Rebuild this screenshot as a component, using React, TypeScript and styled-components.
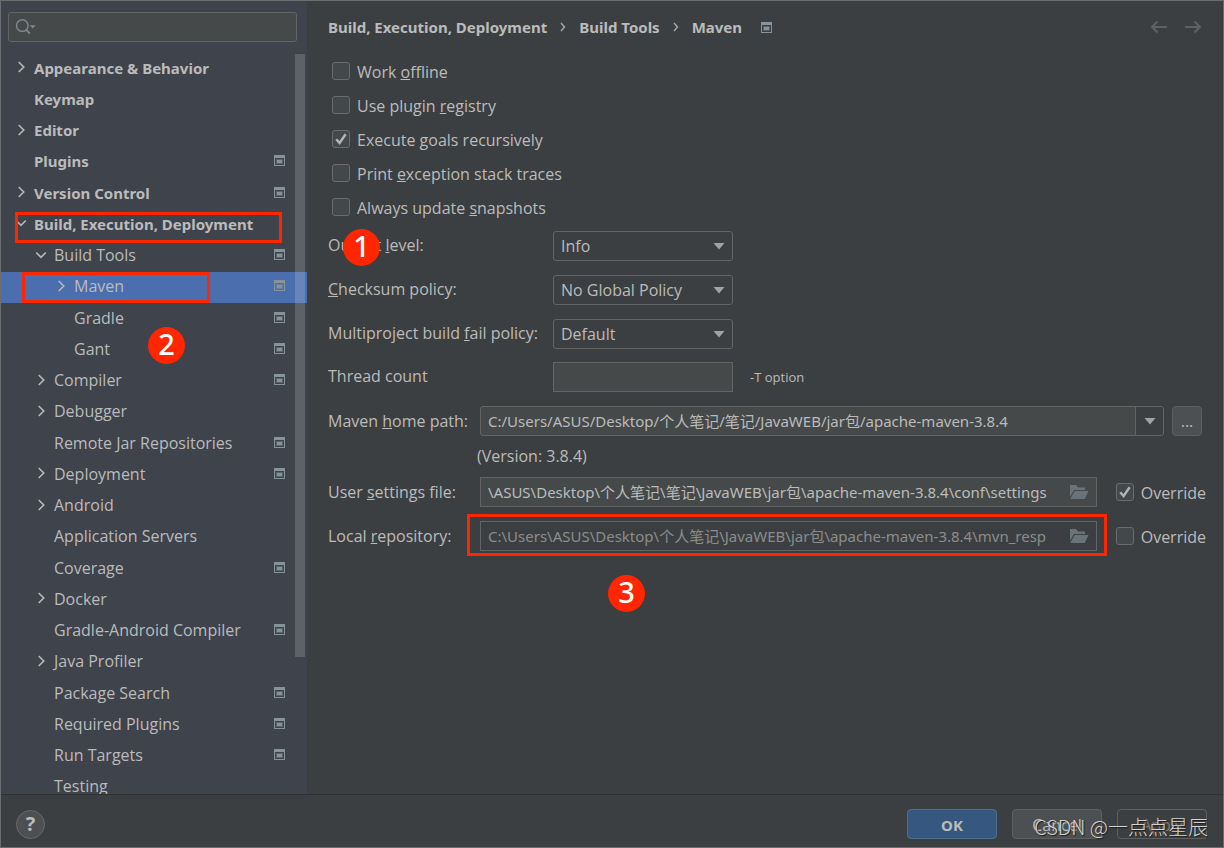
import React from "react";
import styled, { createGlobalStyle, css } from "styled-components";

const color = {
  panel: "#3c3f41",
  sidebar: "#3e434c",
  field: "#45494a",
  border: "#646464",
  text: "#bbbbbb",
  muted: "#8c8c8c",
  selection: "#4b6eaf",
  mark: "#ff2600",
};

const font = {
  body: `"Open Sans", "Noto Sans CJK SC", sans-serif`,
  alt: `"Noto Sans", "Noto Sans CJK SC", sans-serif`,
};

const GlobalStyle = createGlobalStyle`
  *, *::before, *::after { box-sizing: border-box; }
  body { margin: 0; background: ${color.panel}; }
  body, button, input, select {
    font-family: ${font.body};
    font-size: 16px;
    line-height: 20px;
    color: ${color.text};
  }
  button, input, select { margin: 0; outline: none; }
`;

const heading = css`
  font-family: ${font.alt};
  font-size: 15px;
  font-weight: 700;
`;

const Window = styled.div`
  position: relative;
  display: flex;
  flex-direction: column;
  height: 100vh;
  border: 1px solid #6b6e70;
  background: ${color.panel};
`;

const Body = styled.div`
  display: flex;
  flex: 1;
  min-height: 0;
`;

/* ---------- sidebar ---------- */

const Sidebar = styled.aside`
  position: relative;
  display: flex;
  flex-direction: column;
  flex: 0 0 306px;
  gap: 11px;
  padding-top: 11px;
  background: ${color.sidebar};
`;

const SearchBox = styled.label`
  display: flex;
  align-items: center;
  height: 30px;
  margin: 0 10px 0 7px;
  padding: 0 6px;
  border: 1px solid ${color.border};
  border-radius: 3px;
  background: ${color.field};
`;

const SearchInput = styled.input`
  flex: 1;
  min-width: 0;
  border: 0;
  background: transparent;
`;

const TreeViewport = styled.nav`
  position: relative;
  flex: 1;
  min-height: 0;
  overflow: hidden;
`;

const Tree = styled.ul`
  display: flex;
  flex-direction: column;
  height: 750px;
  margin: 0;
  padding: 0;
  list-style: none;
`;

const TreeItem = styled.li`
  position: relative;
  flex: 1;
`;

const TreeRow = styled.button<{ $level: number; $selected?: boolean }>`
  display: flex;
  align-items: center;
  width: 100%;
  height: 100%;
  padding: 0 22px 3px ${(p) => 13 + p.$level * 20}px;
  border: 0;
  background: ${(p) => (p.$selected ? color.selection : "transparent")};
  text-align: left;
  ${(p) => p.$level === 0 && heading}
`;

const ArrowSlot = styled.span`
  display: flex;
  justify-content: center;
  width: 14px;
  margin-right: 6px;
`;

const RowText = styled.span`
  flex: 1;
  padding-top: 1px;
  white-space: nowrap;
`;

const ScrollThumb = styled.div`
  position: absolute;
  top: 53px;
  right: 2px;
  width: 10px;
  height: 603px;
  background: rgba(255, 255, 255, 0.16);
`;

/* ---------- content ---------- */

const Content = styled.main`
  flex: 1;
  min-width: 0;
  padding: 11px 17px 0 21px;
`;

const Header = styled.header`
  display: flex;
  align-items: center;
  height: 30px;
  padding-right: 4px;
  ${heading}
`;

const Crumbs = styled.div`
  display: flex;
  align-items: center;
  flex: 1;
  gap: 13px;
`;

const PageIcon = styled.span`
  display: flex;
  margin-left: 6px;
`;

const NavButtons = styled.div`
  display: flex;
  gap: 16px;
`;

const IconButton = styled.button`
  display: flex;
  padding: 0;
  border: 0;
  background: transparent;
`;

const CheckList = styled.div`
  padding: 12px 0 0 4px;
`;

const CheckRow = styled.div`
  display: flex;
  align-items: center;
  height: 34px;
`;

const CheckLabel = styled.label`
  display: flex;
  align-items: center;
  gap: 7px;
  white-space: nowrap;
`;

const CheckBox = styled.input`
  appearance: none;
  flex: none;
  width: 18px;
  height: 18px;
  border: 1px solid #6b6b6b;
  border-radius: 3px;
  background: #43494a;
`;

const CheckWrap = styled.span`
  position: relative;
  display: flex;
`;

const CheckText = styled.span`
  padding-top: 2px;
`;

const Tick = styled.svg`
  position: absolute;
  top: 0;
  left: 0;
  pointer-events: none;
`;

const Row = styled.div<{ $height?: number }>`
  display: flex;
  align-items: center;
  height: ${(p) => p.$height ?? 44}px;
`;

const RowLabel = styled.label<{ $wide?: boolean }>`
  position: relative;
  flex: none;
  width: ${(p) => (p.$wide ? 225 : 152)}px;
  padding-bottom: ${(p) => (p.$wide ? 2 : 0)}px;
  white-space: nowrap;
`;

const SelectWrap = styled.div`
  position: relative;
  width: 180px;
`;

const fieldBox = css`
  height: 30px;
  border: 1px solid ${color.border};
`;

const Select = styled.select`
  ${fieldBox}
  appearance: none;
  width: 100%;
  padding: 0 28px 0 7px;
  border-radius: 3px;
  background: ${color.panel};
`;

const SelectArrow = styled.span`
  position: absolute;
  top: 12px;
  right: 8px;
  display: flex;
  pointer-events: none;
`;

const ThreadInput = styled.input`
  ${fieldBox}
  width: 180px;
  padding: 0 7px;
  background: ${color.field};
`;

const Hint = styled.span`
  margin-left: 17px;
  font-size: 13px;
`;

const Combo = styled.div`
  ${fieldBox}
  display: flex;
  flex: 1;
  min-width: 0;
  border-radius: 3px;
  overflow: hidden;
  background: ${color.field};
`;

const PathInput = styled.input`
  flex: 1;
  min-width: 0;
  padding: 0 0 1px 7px;
  border: 0;
  background: transparent;
  font-family: ${font.alt};
  font-size: 15px;
  &:disabled { color: ${color.muted}; }
`;

const ComboButton = styled.button`
  display: flex;
  align-items: center;
  justify-content: center;
  width: 28px;
  padding: 0;
  border: 0;
  border-left: 1px solid ${color.border};
  background: ${color.panel};
`;

const MoreButton = styled.button`
  width: 30px;
  height: 30px;
  margin: 0 4px 0 8px;
  padding: 0;
  border: 1px solid #5e6060;
  border-radius: 4px;
  background: #4c5052;
`;

const Version = styled.span`
  padding: 0 0 2px 149px;
`;

const FileField = styled.div<{ $disabled?: boolean }>`
  ${fieldBox}
  position: relative;
  display: flex;
  align-items: center;
  flex: 1;
  min-width: 0;
  margin-right: 19px;
  padding-right: 7px;
  background: ${(p) => (p.$disabled ? color.panel : color.field)};
`;

/* ---------- footer ---------- */

const Footer = styled.footer`
  display: flex;
  align-items: center;
  gap: 15px;
  flex: 0 0 53px;
  padding: 6px 16px 0 15px;
  border-top: 1px solid #2f3133;
`;

const HelpButton = styled.button`
  width: 29px;
  height: 29px;
  margin-right: auto;
  padding: 0;
  border: 1px solid #686a6c;
  border-radius: 50%;
  background: #4c5052;
  font-size: 20px;
  font-weight: 700;
`;

const DialogButton = styled.button<{ $kind?: "primary" | "disabled" }>`
  width: 90px;
  height: 30px;
  padding: 2px 0 0;
  border: 1px solid ${(p) => (p.$kind === "primary" ? "#4c708c" : "#5e6060")};
  border-radius: 4px;
  background: ${(p) =>
    p.$kind === "primary" ? "#365880" : p.$kind === "disabled" ? color.panel : "#4c5052"};
  color: ${(p) => (p.$kind === "disabled" ? "#777777" : color.text)};
  ${(p) => p.$kind === "primary" && heading}
`;

/* ---------- annotations ---------- */

const MarkBox = styled.span<{ $inset: string }>`
  position: absolute;
  inset: ${(p) => p.$inset};
  border: 3px solid ${color.mark};
  pointer-events: none;
`;

const MarkBadge = styled.span<{ $top: number; $left: number }>`
  position: absolute;
  top: ${(p) => p.$top}px;
  left: ${(p) => p.$left}px;
  width: 37px;
  height: 37px;
  border-radius: 50%;
  background: ${color.mark};
  color: #ffffff;
  font-family: ${font.alt};
  font-size: 29px;
  font-weight: 500;
  line-height: 34px;
  text-align: center;
  pointer-events: none;
`;

const Watermark = styled.span`
  position: absolute;
  right: 15px;
  bottom: 6px;
  color: #d4d4d4;
  font-family: "Noto Sans CJK SC", sans-serif;
  font-size: 20px;
  font-weight: 300;
  line-height: 28px;
  text-shadow: 1px 1px 1px #1c1c1c;
  white-space: nowrap;
  pointer-events: none;
`;

/* ---------- icons ---------- */

const Chevron = ({ open }: { open?: boolean }) => (
  <svg width="14" height="14" viewBox="0 0 14 14" fill="none" stroke="#b4b6b8" strokeWidth="1.7">
    <path d={open ? "M2.2 4.5 7 9.3 11.8 4.5" : "M4.7 2 9.7 7 4.7 12"} />
  </svg>
);

const ProjectIcon = () => (
  <svg width="11" height="11" viewBox="0 0 11 11" shapeRendering="crispEdges">
    <path fill="#87939a" fillRule="evenodd" d="M0 0H11V11H0ZM1 3V10H10V3Z" />
    <path fill="#87939a" d="M3 5H8V8H3Z" />
    <path fill="#87939a" fillOpacity="0.4" d="M2 4H9V9H2Z" />
  </svg>
);

const SearchIcon = () => (
  <svg width="22" height="18" viewBox="0 0 22 18" fill="none" stroke="#7f8b91" strokeWidth="1.4">
    <circle cx="7.3" cy="7.6" r="5.8" />
    <path d="M11.3 11.8 14.8 15.6" strokeWidth="1.8" />
    <path d="M14.8 7.3H20.6L17.7 10.5Z" fill="#7f8b91" stroke="none" />
  </svg>
);

const TriangleIcon = () => (
  <svg width="12" height="7" viewBox="0 0 12 7">
    <path d="M0.5 0H11.5L6 6.5Z" fill="#a0a3a5" />
  </svg>
);

const FolderIcon = () => (
  <svg width="20" height="16" viewBox="0 0 20 16" fill="#69747a">
    <path d="M1 1H7L9 3.5H16V6H5L1 13Z" />
    <path d="M5.7 7H19.5L15.8 15H1.2Z" />
  </svg>
);

const NavArrow = ({ forward }: { forward?: boolean }) => (
  <svg width="18" height="14" viewBox="0 0 18 14" fill="none" stroke="#5f6163" strokeWidth="2">
    <path d={forward ? "M1 7H16M10.5 1.5 16 7 10.5 12.5" : "M17 7H2M7.5 1.5 2 7 7.5 12.5"} />
  </svg>
);

const CrumbArrow = () => (
  <svg width="6" height="10" viewBox="0 0 6 10" fill="none" stroke="#a8aaac" strokeWidth="1.4">
    <path d="M1 1 4.5 5 1 9" />
  </svg>
);

/* ---------- data ---------- */

type Node = {
  text: string;
  level: number;
  arrow?: "closed" | "open";
  project?: boolean;
  selected?: boolean;
  mark?: React.ReactNode;
};

const nodes: Node[] = [
  { text: "Appearance & Behavior", level: 0, arrow: "closed" },
  { text: "Keymap", level: 0 },
  { text: "Editor", level: 0, arrow: "closed" },
  { text: "Plugins", level: 0, project: true },
  { text: "Version Control", level: 0, arrow: "closed", project: true },
  {
    text: "Build, Execution, Deployment",
    level: 0,
    arrow: "open",
    mark: <MarkBox $inset="3px 25px -2px 14px" />,
  },
  { text: "Build Tools", level: 1, arrow: "open", project: true },
  {
    text: "Maven",
    level: 2,
    arrow: "closed",
    project: true,
    selected: true,
    mark: <MarkBox $inset="0 97px 0 21px" />,
  },
  { text: "Gradle", level: 2, project: true },
  { text: "Gant", level: 2, project: true, mark: <MarkBadge $top={-7} $left={147}>2</MarkBadge> },
  { text: "Compiler", level: 1, arrow: "closed", project: true },
  { text: "Debugger", level: 1, arrow: "closed" },
  { text: "Remote Jar Repositories", level: 1, project: true },
  { text: "Deployment", level: 1, arrow: "closed", project: true },
  { text: "Android", level: 1, arrow: "closed" },
  { text: "Application Servers", level: 1 },
  { text: "Coverage", level: 1, project: true },
  { text: "Docker", level: 1, arrow: "closed" },
  { text: "Gradle-Android Compiler", level: 1, project: true },
  { text: "Java Profiler", level: 1, arrow: "closed" },
  { text: "Package Search", level: 1, project: true },
  { text: "Required Plugins", level: 1, project: true },
  { text: "Run Targets", level: 1, project: true },
  { text: "Testing", level: 1 },
];

/* Draws a label whose mnemonic letter follows an underscore. */
const Mnemonic = ({ text }: { text: string }) => {
  const at = text.indexOf("_");
  if (at < 0) return <span>{text}</span>;
  return (
    <span>
      {text.slice(0, at)}
      <u>{text[at + 1]}</u>
      {text.slice(at + 2)}
    </span>
  );
};

const Check = ({ text, checked }: { text: string; checked?: boolean }) => {
  const [on, setOn] = React.useState(!!checked);
  return (
    <CheckLabel>
      <CheckWrap>
        <CheckBox type="checkbox" checked={on} onChange={() => setOn(!on)} />
        {on && (
          <Tick width="18" height="18" viewBox="0 0 18 18" fill="none" stroke="#b4b4b4" strokeWidth="2.4">
            <path d="M4.2 9.2 7.6 13 13.6 4.2" />
          </Tick>
        )}
      </CheckWrap>
      <CheckText>
        <Mnemonic text={text} />
      </CheckText>
    </CheckLabel>
  );
};

const Choice = ({
  id,
  label,
  value,
  height,
  children,
}: {
  id: string;
  label: string;
  value: string;
  height?: number;
  children?: React.ReactNode;
}) => (
  <Row $height={height}>
    <RowLabel $wide htmlFor={id}>
      <Mnemonic text={label} />
      {children}
    </RowLabel>
    <SelectWrap>
      <Select id={id} defaultValue={value}>
        <option>{value}</option>
      </Select>
      <SelectArrow>
        <TriangleIcon />
      </SelectArrow>
    </SelectWrap>
  </Row>
);

export default function App() {
  return (
    <>
      <GlobalStyle />
      <Window>
        <Body>
          <Sidebar>
            <SearchBox>
              <SearchIcon />
              <SearchInput type="text" aria-label="Search settings" />
            </SearchBox>
            <TreeViewport aria-label="Settings">
              <Tree>
                {nodes.map((n) => (
                  <TreeItem key={n.text}>
                    <TreeRow type="button" $level={n.level} $selected={n.selected}>
                      <ArrowSlot>{n.arrow && <Chevron open={n.arrow === "open"} />}</ArrowSlot>
                      <RowText>{n.text}</RowText>
                      {n.project && <ProjectIcon />}
                    </TreeRow>
                    {n.mark}
                  </TreeItem>
                ))}
              </Tree>
            </TreeViewport>
            <ScrollThumb />
          </Sidebar>

          <Content>
            <Header>
              <Crumbs>
                <span>Build, Execution, Deployment</span>
                <CrumbArrow />
                <span>Build Tools</span>
                <CrumbArrow />
                <span>Maven</span>
                <PageIcon>
                  <ProjectIcon />
                </PageIcon>
              </Crumbs>
              <NavButtons>
                <IconButton type="button" aria-label="Back">
                  <NavArrow />
                </IconButton>
                <IconButton type="button" aria-label="Forward">
                  <NavArrow forward />
                </IconButton>
              </NavButtons>
            </Header>

            <CheckList>
              <CheckRow><Check text="Work _offline" /></CheckRow>
              <CheckRow><Check text="Use plugin _registry" /></CheckRow>
              <CheckRow><Check text="Execute _goals recursively" checked /></CheckRow>
              <CheckRow><Check text="Print _exception stack traces" /></CheckRow>
              <CheckRow><Check text="Always update _snapshots" /></CheckRow>
            </CheckList>

            <Choice id="output" label="Output _level:" value="Info">
              <MarkBadge $top={-6} $left={15}>1</MarkBadge>
            </Choice>
            <Choice id="checksum" label="_Checksum policy:" value="No Global Policy" />
            <Choice id="fail" label="Multiproject build _fail policy:" value="Default" height={43} />
            <Row>
              <RowLabel $wide htmlFor="threads">Thread count</RowLabel>
              <ThreadInput id="threads" type="text" />
              <Hint>-T option</Hint>
            </Row>
            <Row>
              <RowLabel htmlFor="home"><Mnemonic text="Maven _home path:" /></RowLabel>
              <Combo>
                <PathInput
                  id="home"
                  type="text"
                  defaultValue="C:/Users/ASUS/Desktop/个人笔记/笔记/JavaWEB/jar包/apache-maven-3.8.4"
                />
                <ComboButton type="button" aria-label="Show paths">
                  <TriangleIcon />
                </ComboButton>
              </Combo>
              <MoreButton type="button">...</MoreButton>
            </Row>
            <Row $height={27}>
              <Version>(Version: 3.8.4)</Version>
            </Row>
            <Row>
              <RowLabel htmlFor="settings"><Mnemonic text="User _settings file:" /></RowLabel>
              <FileField>
                <PathInput
                  id="settings"
                  type="text"
                  defaultValue="\ASUS\Desktop\个人笔记\笔记\JavaWEB\jar包\apache-maven-3.8.4\conf\settings"
                />
                <FolderIcon />
              </FileField>
              <Check text="Override" checked />
            </Row>
            <Row>
              <RowLabel htmlFor="repo"><Mnemonic text="Local _repository:" /></RowLabel>
              <FileField $disabled>
                <PathInput
                  id="repo"
                  type="text"
                  disabled
                  defaultValue="C:\Users\ASUS\Desktop\个人笔记\JavaWEB\jar包\apache-maven-3.8.4\mvn_resp"
                />
                <FolderIcon />
                <MarkBox $inset="-8px -11px -6px -14px" />
                <MarkBadge $top={53} $left={127}>3</MarkBadge>
              </FileField>
              <Check text="Override" />
            </Row>
          </Content>
        </Body>

        <Footer>
          <HelpButton type="button" aria-label="Help">?</HelpButton>
          <DialogButton type="button" $kind="primary">OK</DialogButton>
          <DialogButton type="button">Cancel</DialogButton>
          <DialogButton type="button" $kind="disabled">Apply</DialogButton>
        </Footer>
        <Watermark>CSDN @一点点星辰</Watermark>
      </Window>
    </>
  );
}
